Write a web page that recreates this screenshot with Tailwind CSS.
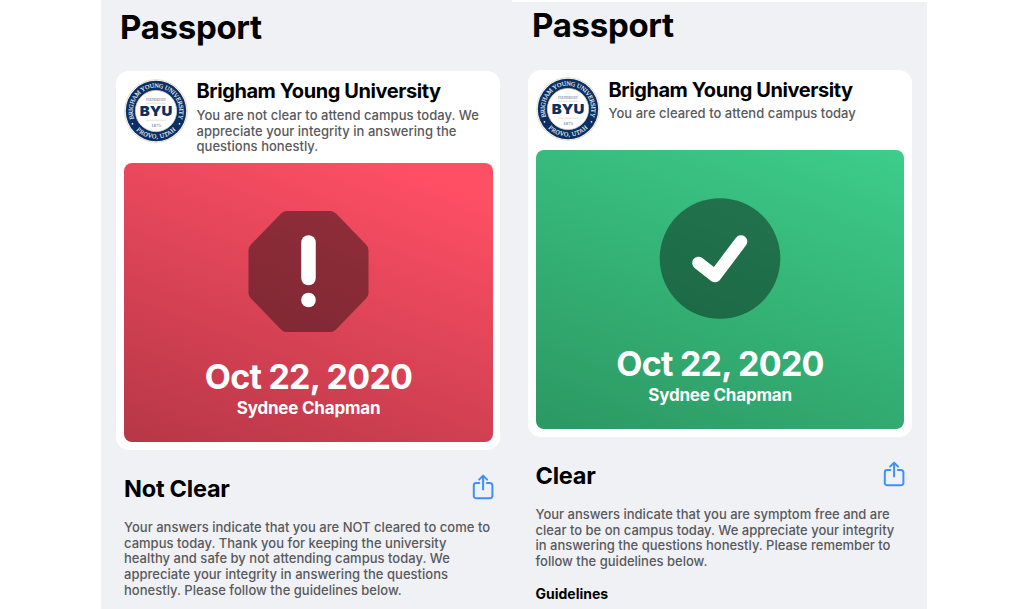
<!DOCTYPE html>
<html lang="en">
<head>
<meta charset="utf-8">
<title>Passport</title>
<script src="https://cdn.jsdelivr.net/npm/@tailwindcss/browser@4"></script>
</head>
<body class="bg-white">
<svg class="hidden">
  <symbol id="seal" viewBox="0 0 64 64">
    <circle cx="32" cy="32" r="31.3" fill="#fff" stroke="#d9d3bd" stroke-width=".8"/>
    <circle cx="32" cy="32" r="30.2" fill="#0b2f63"/>
    <circle cx="32" cy="32" r="20.6" fill="#fff" stroke="#d9d3bd" stroke-width=".8"/>
    <path id="arcTop" d="M10.9 41.8A23.3 23.3 0 1 1 53.1 41.8" fill="none"/>
    <path id="arcBottom" d="M8 45.3A27.4 27.4 0 0 0 56 45.3" fill="none"/>
    <g font-family="Liberation Serif, serif" font-size="6.2" fill="#f0f3f8" stroke="#f0f3f8" stroke-width=".12" text-anchor="middle">
      <text textLength="89"><textPath href="#arcTop" startOffset="50%" textLength="89">BRIGHAM YOUNG UNIVERSITY</textPath></text>
      <text textLength="44"><textPath href="#arcBottom" startOffset="50%" textLength="44">PROVO, UTAH</textPath></text>
    </g>
    <circle cx="8.5" cy="44.8" r=".9" fill="#e4e8ef"/>
    <circle cx="55.5" cy="44.8" r=".9" fill="#e4e8ef"/>
    <path d="M22 24.2H42M22 41.2H42" stroke="#e3ddc8" stroke-width=".9"/>
    <text x="32" y="21.8" font-family="Liberation Serif, serif" font-size="3.6" fill="#5e7699" text-anchor="middle" textLength="20">FOUNDED BY</text>
    <text x="32" y="37.2" font-family="Inter, sans-serif" font-weight="900" font-size="13.6" fill="#0b2f63" text-anchor="middle" textLength="32.5" lengthAdjust="spacingAndGlyphs">BYU</text>
    <text x="32" y="47.6" font-family="Liberation Serif, serif" font-size="5" fill="#44608a" text-anchor="middle" textLength="10">1875</text>
  </symbol>
  <symbol id="share" viewBox="0 0 22 26">
    <path d="M7.3 9H4.2A2.4 2.4 0 0 0 1.8 11.4V21.9A2.4 2.4 0 0 0 4.2 24.3H18A2.4 2.4 0 0 0 20.4 21.9V11.4A2.4 2.4 0 0 0 18 9H14.9M11.1 15.6V1.8M7.1 5.6L11.1 1.6L15.1 5.6" fill="none" stroke="#3f8ff8" stroke-width="2" stroke-linecap="round" stroke-linejoin="round"/>
  </symbol>
</svg>
<div class="flex w-[1024px] h-[609px] overflow-hidden pl-[101px] font-['Inter',sans-serif] text-black whitespace-nowrap">
  <section class="w-[411px] h-full bg-[#f0f1f5] pl-[15px] pt-[7px]">
    <h1 class="pl-[4px] text-[33px] leading-[40px] font-bold tracking-[-0.3px]">Passport</h1>
    <article class="mt-[24px] w-[384px] h-[379px] rounded-[13px] bg-white px-[8px] pt-[8px] flex flex-col">
      <header class="flex h-[84px]">
        <svg class="w-[64px] h-[64px] shrink-0"><use href="#seal"/></svg>
        <div class="pl-[8.5px]">
          <h2 class="text-[20px] leading-[24px] font-bold tracking-[-0.42px]">Brigham Young University</h2>
          <p class="mt-[5px] text-[13px] leading-[15.7px] font-medium text-[#58595c] tracking-[0.03px]">You are not clear to attend campus today. We<br>appreciate your integrity in answering the<br>questions honestly.</p>
        </div>
      </header>
      <div class="w-[369px] h-[279px] rounded-[8px] bg-linear-[21deg,#b63747,#ff4f65_92%] flex flex-col items-center pt-[48px] text-white">
        <svg class="w-[120px] h-[121px] shrink-0 overflow-visible" viewBox="0.5 0 120 121">
          <path d="M38 0H82Q85 0 87.5 2.5L117.5 33.5Q120 36 120 39V82Q120 85 117.5 87.5L87.5 118.5Q85 121 82 121H38Q35 121 32.5 118.5L2.5 87.5Q0 85 0 82V39Q0 36 2.5 33.5L32.5 2.5Q35 0 38 0Z" fill="#2c0f13" fill-opacity=".5"/>
          <path d="M60 31.5V67" stroke="#fff" stroke-width="14.5" stroke-linecap="round"/>
          <circle cx="60" cy="89" r="7.3" fill="#fff"/>
        </svg>
        <div class="mt-[25px] text-[34px] leading-[40px] font-bold tracking-[-0.75px]">Oct 22, 2020</div>
        <div class="text-[17px] leading-[22px] font-bold tracking-[-0.2px]">Sydnee Chapman</div>
      </div>
    </article>
    <div class="mt-[24px] pl-[8px] w-[378px] flex justify-between">
      <h3 class="text-[23.5px] leading-[30px] font-bold tracking-[-0.22px]">Not Clear</h3>
      <svg class="w-[22px] h-[26px]"><use href="#share"/></svg>
    </div>
    <p class="mt-[16px] pl-[8px] text-[13px] leading-[15.7px] font-medium text-[#58595c] tracking-[0.02px]">Your answers indicate that you are NOT cleared to come to<br>campus today. Thank you for keeping the university<br>healthy and safe by not attending campus today. We<br>appreciate your integrity in answering the questions<br>honestly. Please follow the guidelines below.</p>
  </section>
  <section class="w-[415px] h-full mt-[2px] bg-[#f0f1f5] pl-[16px] pt-[3px]">
    <h1 class="pl-[4px] text-[33px] leading-[40px] font-bold tracking-[-0.3px]">Passport</h1>
    <article class="mt-[25px] w-[384px] h-[367px] rounded-[13px] bg-white px-[8px] pt-[7px] flex flex-col">
      <header class="flex h-[73px]">
        <svg class="w-[64px] h-[64px] shrink-0"><use href="#seal"/></svg>
        <div class="pl-[8.5px] pt-[1px]">
          <h2 class="text-[20px] leading-[24px] font-bold tracking-[-0.42px]">Brigham Young University</h2>
          <p class="mt-[4px] text-[13px] leading-[15.7px] font-medium text-[#58595c] tracking-[0.03px]">You are cleared to attend campus today</p>
        </div>
      </header>
      <div class="w-[368px] h-[279px] rounded-[8px] bg-linear-[21deg,#2c9863,#3dcd8a] flex flex-col items-center pt-[48px] text-white">
        <svg class="w-[121px] h-[121px] shrink-0 overflow-visible" viewBox="0.5 0 121 121">
          <circle cx="60.5" cy="60.5" r="60.3" fill="#07251a" fill-opacity=".5"/>
          <path d="M39 65L55.5 78L81.5 43.5" fill="none" stroke="#fff" stroke-width="12.6" stroke-linecap="round" stroke-linejoin="round"/>
        </svg>
        <div class="mt-[25px] text-[34px] leading-[40px] font-bold tracking-[-0.75px]">Oct 22, 2020</div>
        <div class="text-[17px] leading-[22px] font-bold tracking-[-0.2px]">Sydnee Chapman</div>
      </div>
    </article>
    <div class="mt-[24px] pl-[7.5px] w-[377px] flex justify-between">
      <h3 class="text-[23.5px] leading-[30px] font-bold tracking-[-0.22px]">Clear</h3>
      <svg class="w-[22px] h-[26px]"><use href="#share"/></svg>
    </div>
    <p class="mt-[16px] pl-[7.5px] text-[13px] leading-[15.7px] font-medium text-[#58595c]">Your answers indicate that you are symptom free and are<br>clear to be on campus today. We appreciate your integrity<br>in answering the questions honestly. Please remember to<br>follow the guidelines below.</p>
    <h4 class="mt-[15px] pl-[7.5px] text-[14px] leading-[18px] font-bold">Guidelines</h4>
  </section>
</div>
</body>
</html>
